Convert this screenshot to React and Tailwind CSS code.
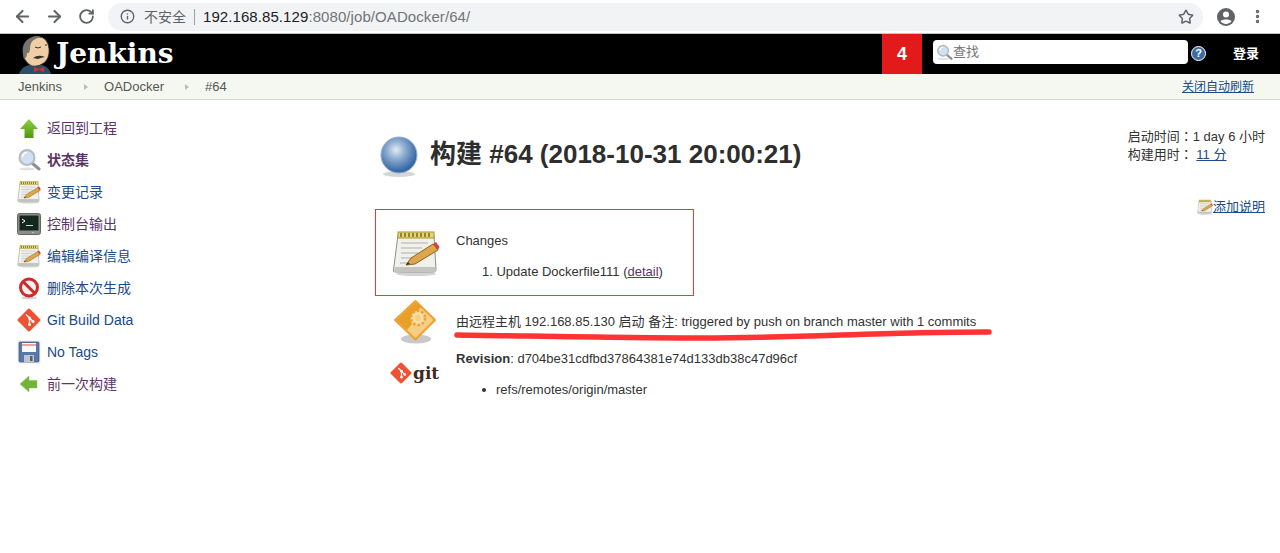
import { ArrowLeft, ArrowRight, RotateCw, Info, Star, EllipsisVertical } from "lucide-react";

const font = "font-['Liberation_Sans','Noto_Sans_CJK_SC',sans-serif]";

function UpIcon() {
  return (
    <svg width="24" height="24" viewBox="0 0 24 24">
      <defs>
        <linearGradient id="up" x1="0" y1="0" x2="0" y2="1">
          <stop offset="0" stopColor="#8fcf4a" />
          <stop offset="1" stopColor="#4e9a06" />
        </linearGradient>
      </defs>
      <path d="M12 3 L21 13 H16.5 V22 H7.5 V13 H3 Z" fill="url(#up)" />
    </svg>
  );
}

function SearchIcon({ size = 24 }) {
  return (
    <svg width={size} height={size} viewBox="0 0 24 24">
      <ellipse cx="10" cy="21" rx="8" ry="1.5" fill="#e2e2e2" />
      <path d="M15 15 L22 21" stroke="#8c8f92" strokeWidth="3" strokeLinecap="round" />
      <circle cx="10" cy="9.5" r="7.5" fill="#cfe0f3" stroke="#b4bac0" strokeWidth="2" />
      <path d="M5.5 9 A5 5 0 0 1 10 4.5" fill="none" stroke="#fff" strokeWidth="1.5" />
    </svg>
  );
}

function NotepadIcon({ size = 24 }) {
  return (
    <svg width={size} height={size} viewBox="0 0 48 48">
      <ellipse cx="24" cy="45" rx="20" ry="2" fill="#d4d4d4" />
      <path d="M6 6 H42 L44 41 Q44 43 42 43 H3 Q1 43 1.500 41 Z" fill="#f0f0ec" stroke="#8e8e8a" strokeWidth="1" />
      <path d="M3 38 H43 L44 43 H2 Z" fill="#c4c4c0" />
      <rect x="6" y="3" width="36" height="6" fill="#e9d46e" stroke="#a8923c" strokeWidth="1" />
      <path d="M9 4 V8 M13 4 V8 M17 4 V8 M21 4 V8 M25 4 V8 M29 4 V8 M33 4 V8 M37 4 V8" stroke="#7a6a20" strokeWidth="1.5" />
      <path d="M9 14 H36 M9 19 H30 M9 24 H26 M9 29 H20 M8 34 H16" stroke="#b0b0ab" strokeWidth="1" />
      <path d="M14 36 L19 29 L41 15 L46 21 L23 35 Z" fill="#dca64a" stroke="#8a6424" strokeWidth="1" />
      <path d="M41 15 L46 21 L47.500 18 L44 13 Z" fill="#d8403a" />
      <path d="M14 36 L16 33 L18 35 Z" fill="#333" />
    </svg>
  );
}

function TerminalIcon() {
  return (
    <svg width="24" height="24" viewBox="0 0 24 24">
      <rect x="0.500" y="1.500" width="23" height="21" rx="2" fill="#8b8e88" stroke="#666" />
      <rect x="2.500" y="3.500" width="19" height="15" fill="#14271d" />
      <path d="M5 7 L8 9 L5 11" fill="none" stroke="#fff" strokeWidth="1" />
      <path d="M9 13.500 H16" stroke="#cfd8cf" strokeWidth="1" />
      <circle cx="16" cy="20.500" r="0.700" fill="#cde8a0" />
    </svg>
  );
}

function NoIcon() {
  return (
    <svg width="24" height="24" viewBox="0 0 24 24">
      <ellipse cx="12" cy="22" rx="8" ry="1.500" fill="#d4d4d4" />
      <circle cx="12" cy="11.500" r="8.500" fill="#f4eeee" stroke="#cf2a2a" strokeWidth="3" />
      <path d="M6 5.500 L18 17.500" stroke="#cf2a2a" strokeWidth="3" />
    </svg>
  );
}

function GitDiamond({ size = 24 }) {
  return (
    <svg width={size} height={size} viewBox="0 0 24 24">
      <rect x="3.500" y="3.500" width="17" height="17" rx="1.500" transform="rotate(45 12 12)" fill="#f05133" />
      <path d="M9 6.500 L12.500 10 V16 M12.500 10 L16 13.500" fill="none" stroke="#fff" strokeWidth="1.300" />
      <circle cx="12.500" cy="10" r="1.500" fill="#fff" />
      <circle cx="12.500" cy="16.500" r="1.500" fill="#fff" />
      <circle cx="16" cy="13.500" r="1.500" fill="#fff" />
    </svg>
  );
}

function FloppyIcon() {
  return (
    <svg width="24" height="24" viewBox="0 0 24 24">
      <rect x="0.500" y="0.500" width="23" height="23" fill="#ececec" />
      <rect x="2" y="2" width="20" height="20" rx="1" fill="#5878ab" stroke="#3e5a8a" strokeWidth="0.700" />
      <rect x="5" y="3" width="14" height="9" fill="#fafafa" />
      <path d="M5 5 H19" stroke="#d8503a" strokeWidth="1" />
      <rect x="7" y="15" width="10" height="7" fill="#bfc6cf" />
      <rect x="13" y="16" width="2.500" height="5" fill="#55606f" />
    </svg>
  );
}

function BackIcon() {
  return (
    <svg width="24" height="24" viewBox="0 0 24 24">
      <path d="M3 12 L12 4 V8.500 H20 V16 H12 V20 Z" fill="#72b437" stroke="#8cc152" strokeWidth="0.500" />
    </svg>
  );
}

function BuildBall() {
  return (
    <svg width="40" height="42" viewBox="0 0 40 42">
      <defs>
        <radialGradient id="ball" cx="0.420" cy="0.360" r="0.720">
          <stop offset="0" stopColor="#e3ebf2" />
          <stop offset="0.350" stopColor="#8eadd0" />
          <stop offset="0.800" stopColor="#3a6ba8" />
          <stop offset="1" stopColor="#2c5a9a" />
        </radialGradient>
      </defs>
      <ellipse cx="20" cy="38" rx="16" ry="3" fill="#d6d6d6" />
      <circle cx="20" cy="19" r="18" fill="url(#ball)" stroke="#8fb0d4" strokeWidth="1" />
    </svg>
  );
}

function CauseIcon() {
  return (
    <svg width="48" height="46" viewBox="0 0 48 46">
      <ellipse cx="25" cy="40" rx="15" ry="4.500" fill="#c8c8c8" />
      <path d="M24.500 2 L44 21 L24.500 40.500 L4 21 Z" fill="#f8cd84" stroke="#f0a030" strokeWidth="2" strokeLinejoin="round" />
      <path d="M24.500 3.500 L5.500 21 L16 31 L21 25 L19 21 L21 15 L31 8 Z" fill="#e89f28" />
      <circle cx="27" cy="19" r="7" fill="#fbdda0" stroke="#e9a23a" strokeWidth="2.500" strokeDasharray="2.500 2" />
      <circle cx="27" cy="19" r="3" fill="#f8cd84" />
    </svg>
  );
}

function ProfileIcon() {
  return (
    <svg width="20" height="20" viewBox="0 0 20 20" className="ml-[13px]">
      <circle cx="10" cy="10" r="9" fill="#5f6368" />
      <circle cx="10" cy="7.500" r="3" fill="#fff" />
      <path d="M4.500 14.200 C6 11.800 14 11.800 15.500 14.200 C14 16 12 17 10 17 C8 17 6 16 4.500 14.200 Z" fill="#fff" />
    </svg>
  );
}

function JenkinsFace() {
  return (
    <svg width="34" height="40" viewBox="0 0 34 40">
      <path d="M1 40 Q3 33 11 31 H24 Q31 33 33 40 Z" fill="#2d4f66" />
      <path d="M6 24 Q3 8 15 4 Q26 0 30 10 Q33 20 28 27 Q22 33 14 32 Q9 30 6 24 Z" fill="#f0cda4" stroke="#333" strokeWidth="0.800" />
      <path d="M6 25 Q1 8 14 3 Q19 1 23 3 Q12 5 12 14 Q12 20 9 19 Q9 24 6 25 Z" fill="#77736f" />
      <path d="M17 13 Q20 15 23 13 M27 11 H29" stroke="#333" strokeWidth="1" fill="none" />
      <path d="M15 24 Q20 20 27 23 Q22 24 20 25 Z" fill="#333" />
      <path d="M16 33 L21 35 L26 33 V38 L21 36 L16 38 Z" fill="#d3302b" />
    </svg>
  );
}

const links = [
  { icon: <UpIcon />, label: "返回到工程", color: "text-[#5c3566]" },
  { icon: <SearchIcon />, label: "状态集", color: "text-[#5c3566] font-bold" },
  { icon: <NotepadIcon />, label: "变更记录", color: "text-[#204a87]" },
  { icon: <TerminalIcon />, label: "控制台输出", color: "text-[#5c3566]" },
  { icon: <NotepadIcon />, label: "编辑编译信息", color: "text-[#204a87]" },
  { icon: <NoIcon />, label: "删除本次生成", color: "text-[#204a87]" },
  { icon: <GitDiamond />, label: "Git Build Data", color: "text-[#204a87]" },
  { icon: <FloppyIcon />, label: "No Tags", color: "text-[#204a87]" },
  { icon: <BackIcon />, label: "前一次构建", color: "text-[#5c3566]" },
];

function BrowserBar() {
  return (
    <div className="h-[34px] bg-white flex items-center pl-[13px] border-b border-[#c4c4c4]">
      <ArrowLeft size={19} strokeWidth={2.6} className="text-[#5f6368]" />
      <ArrowRight size={19} strokeWidth={2.6} className="text-[#5f6368] ml-[13px]" />
      <RotateCw size={17} strokeWidth={2.6} className="text-[#5f6368] ml-[14px]" />
      <div className="ml-[13px] w-[1095px] h-[28px] rounded-full bg-[#f1f3f4] flex items-center pl-[12px] pr-[9px]">
        <Info size={15} strokeWidth={2.2} className="text-[#5f6368]" />
        <span className="ml-[9px] text-[14px] text-[#5f6368]">不安全</span>
        <span className="ml-[8px] h-[16px] w-px bg-[#9aa0a6]" />
        <span className="ml-[8px] text-[15px] tracking-[0.08px] text-[#202124]">
          192.168.85.129<span className="text-[#70757a]">:8080/job/OADocker/64/</span>
        </span>
        <Star size={16} strokeWidth={2.2} className="text-[#5f6368] ml-auto" />
      </div>
      <ProfileIcon />
      <EllipsisVertical size={17} strokeWidth={2.8} className="text-[#5f6368] ml-[13px]" />
    </div>
  );
}

export default function App() {
  return (
    <div className={`${font} w-[1280px] h-[553px] bg-white text-[13px] leading-[16px] text-[#333] overflow-hidden`}>
      <BrowserBar />
      <div className="h-[40px] bg-black flex items-center pl-[18px]">
        <JenkinsFace />
        <span className="ml-[4px] w-[115px] font-['DejaVu_Serif',serif] font-bold text-[28px] text-white whitespace-nowrap">Jenkins</span>
        <div className="ml-[711px] w-[40px] h-[40px] bg-[#e31a1a] flex items-center justify-center text-white font-bold text-[18px]">4</div>
        <div className="ml-[11px] mb-[4px] w-[255px] h-[24px] bg-white rounded-[4px] flex items-center pl-[3px]">
          <SearchIcon size={17} />
          <span className="text-[#757575] text-[13px]">查找</span>
        </div>
        <div className="ml-[3px] mb-[2px] w-[15px] h-[15px] rounded-full bg-[#3b6ba5] border border-white text-white text-[11px] font-bold flex items-center justify-center">?</div>
        <span className="ml-[27px] text-white font-bold text-[13px]">登录</span>
      </div>
      <div className="h-[26px] bg-[#f5f8f1] border-b border-[#d3d7cf] flex items-center pl-[18px] pr-[26px] text-[#555753]">
        <span>Jenkins</span>
        <span className="ml-[22px] w-0 h-0 border-y-[3px] border-y-transparent border-l-[4px] border-l-[#babdb6]" />
        <span className="ml-[16px]">OADocker</span>
        <span className="ml-[21px] w-0 h-0 border-y-[3px] border-y-transparent border-l-[4px] border-l-[#babdb6]" />
        <span className="ml-[16px]">#64</span>
        <a className="ml-auto text-[12px] text-[#204a87] underline">关闭自动刷新</a>
      </div>
      <div className="flex">
        <div className="w-[375px] pt-[12px] pl-[17px] flex flex-col text-[14px]">
          {links.map((l) => (
            <div key={l.label} className="h-[32px] flex items-center gap-[6px]">
              {l.icon}
              <span className={l.color}>{l.label}</span>
            </div>
          ))}
        </div>
        <div className="flex-1 pt-[32px] relative">
          <div className="flex items-center pl-[4px] h-[44px]">
            <div className="mt-[6px]"><BuildBall /></div>
            <h1 className="ml-[11px] text-[26px] leading-[30px] font-bold text-[#2e2e2e]">构建 #64 (2018-10-31 20:00:21)</h1>
          </div>
          <div className="mt-[33px] w-[319px] h-[87px] border border-[#ff3333] flex items-center pl-[16px]">
            <NotepadIcon size={48} />
            <div className="ml-[16px] pt-[8px]">
              <div>Changes</div>
              <div className="mt-[15px] ml-[26px]">1. Update Dockerfile111 (<a className="text-[#5c3566] underline">detail</a>)</div>
            </div>
          </div>
          <div className="flex mt-[3px]">
            <div className="w-[81px] pl-[16px]"><CauseIcon /></div>
            <div className="pt-[15px]">由远程主机 192.168.85.130 启动 备注: triggered by push on branch master with 1 commits</div>
          </div>
          <div className="flex mt-[2px]">
            <div className="w-[81px] pl-[15px] flex items-center h-[30px] mt-[11px]">
              <GitDiamond size={22} />
              <span className="ml-[1px] font-['DejaVu_Serif',serif] font-bold text-[17px] text-[#3d2b1f] leading-none">git</span>
            </div>
            <div>
              <div className="pt-[4px]"><b>Revision</b>: d704be31cdfbd37864381e74d133db38c47d96cf</div>
              <div className="mt-[15px] ml-[40px] flex items-center">
                <span className="w-[4px] h-[4px] rounded-full bg-[#333] mr-[10px] -ml-[14px]" />
                refs/remotes/origin/master
              </div>
            </div>
          </div>
          {/* hand-drawn red underline over the cause line */}
          <svg className="absolute left-[78px] top-[229px]" width="545" height="14" viewBox="0 0 545 14">
            <path d="M4 6 C80 7 170 9 247 9 C330 9 400 5 460 4 C490 3 520 3 536 3" fill="none" stroke="#ff3333" strokeWidth="5.500" strokeLinecap="round" />
          </svg>
          <div className="absolute right-[15px] top-[28px] whitespace-nowrap">
            <div>启动时间<span className="font-['Noto_Sans_CJK_TC']">：</span>1 day 6 小时</div>
            <div className="mt-[1px]">构建用时<span className="font-['Noto_Sans_CJK_TC']">：</span> <a className="text-[#204a87] underline">11 分</a></div>
          </div>
          <div className="absolute right-[15px] top-[99px] flex items-center">
            <NotepadIcon size={16} />
            <a className="text-[#204a87] underline">添加说明</a>
          </div>
        </div>
      </div>
    </div>
  );
}
